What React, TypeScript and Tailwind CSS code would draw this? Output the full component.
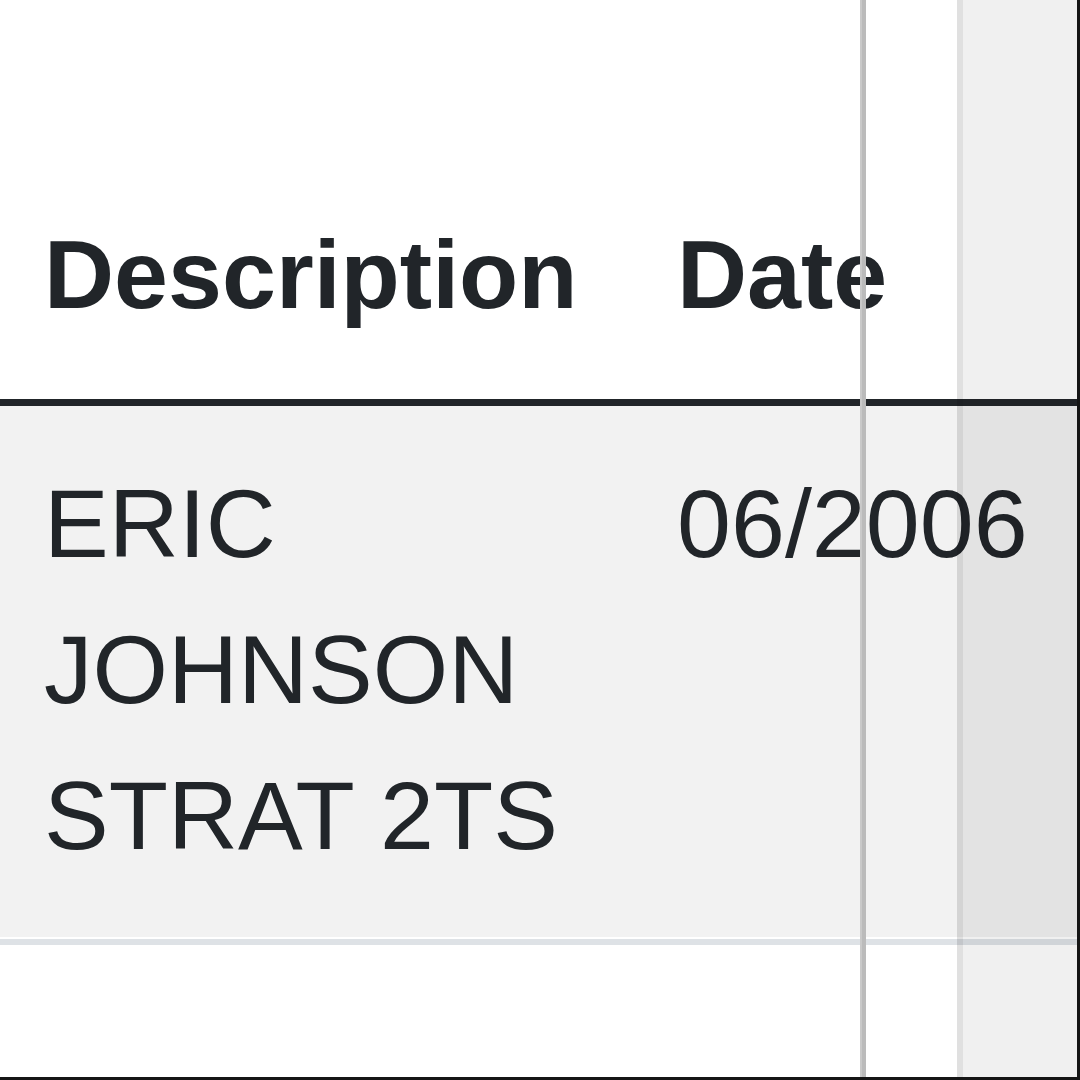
import React from "react";

export default function App() {
  return (
    <div className="relative w-[1080px] h-[1080px] overflow-hidden bg-white border-r-[3px] border-b-[3px] border-[#151515] font-['Liberation_Sans',Arial,sans-serif] text-[#212529]">
      <div className="flex h-[406px] items-end border-b-[7px] border-[#212529] text-[97px] font-bold leading-[146px]">
        <div className="w-[677px] shrink-0 pl-[44px] pb-[51px]">Description</div>
        <div className="flex-1 pb-[51px]">Date</div>
      </div>
      <div className="flex bg-[#f2f2f2] pt-[45px] pb-[48px] text-[97px] leading-[146px]">
        <div className="w-[677px] shrink-0 pl-[44px]">ERIC JOHNSON STRAT 2TS</div>
        <div className="flex-1">06/2006</div>
      </div>
      <div className="h-[2px] bg-white" />
      <div className="h-[6px] bg-[#dee2e6]" />

      {/* overlay column guides */}
      <div className="absolute top-0 bottom-0 left-[860px] w-[6px] bg-[#bbbbbb] border-l-2 border-[#c9c9c9]" />
      <div className="absolute top-0 bottom-0 left-[957px] w-[6px] bg-[rgba(0,0,0,0.12)]" />
      <div className="absolute top-0 bottom-0 left-[963px] right-0 bg-[rgba(0,0,0,0.06)]" />
    </div>
  );
}
